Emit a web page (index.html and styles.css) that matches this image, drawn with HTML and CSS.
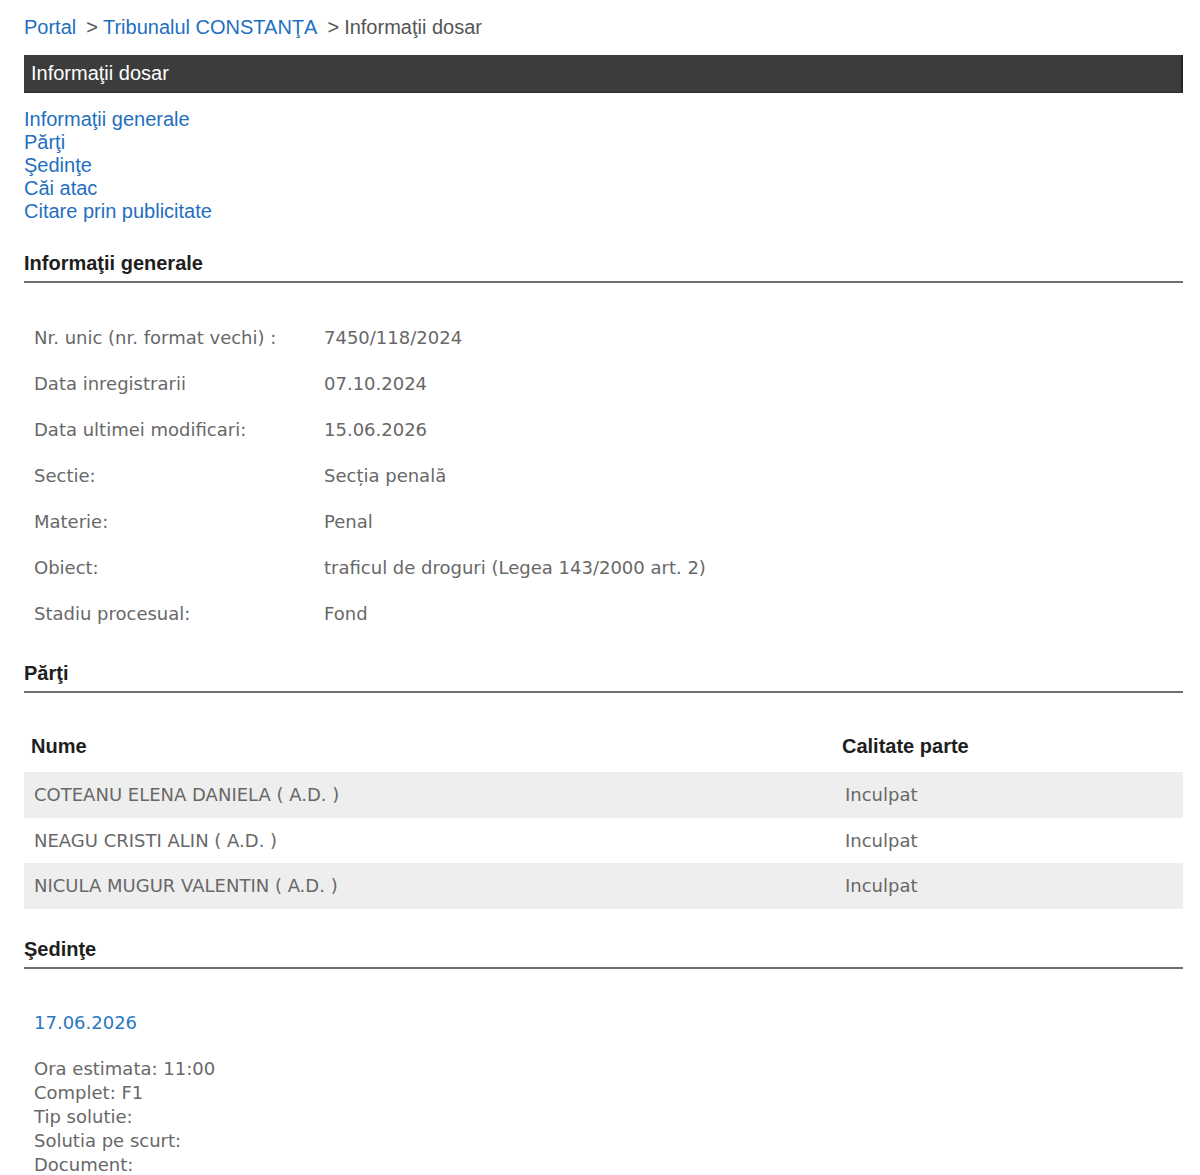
FILE: index.html
```html
<!DOCTYPE html>
<html lang="ro">

<head>
    <meta charset="UTF-8">
    <meta name="viewport" content="width=device-width, initial-scale=1.0">
    <title>Informaţii dosar</title>
    <link rel="stylesheet" href="styles.css">
</head>

<body>
    <div class="page">
        <div class="breadcrumb">
            <a href="#">Portal</a><span class="sep">&gt;</span><a href="#">Tribunalul CONSTANŢA</a><span class="sep">&gt;</span><span class="current">Informaţii dosar</span>
        </div>

        <div class="title-bar">Informaţii dosar</div>

        <ul class="toc">
            <li><a href="#generale">Informaţii generale</a></li>
            <li><a href="#parti">Părţi</a></li>
            <li><a href="#sedinte">Şedinţe</a></li>
            <li><a href="#cai">Căi atac</a></li>
            <li><a href="#citare">Citare prin publicitate</a></li>
        </ul>

        <h2 class="section-title" id="generale">Informaţii generale</h2>
        <table class="details">
            <tr><td class="label">Nr. unic (nr. format vechi) :</td><td>7450/118/2024</td></tr>
            <tr><td class="label">Data inregistrarii</td><td>07.10.2024</td></tr>
            <tr><td class="label">Data ultimei modificari:</td><td>15.06.2026</td></tr>
            <tr><td class="label">Sectie:</td><td>Secția penală</td></tr>
            <tr><td class="label">Materie:</td><td>Penal</td></tr>
            <tr><td class="label">Obiect:</td><td>traficul de droguri (Legea 143/2000 art. 2)</td></tr>
            <tr><td class="label">Stadiu procesual:</td><td>Fond</td></tr>
        </table>

        <h2 class="section-title after-details" id="parti">Părţi</h2>
        <table class="parties">
            <thead>
                <tr><th class="name-col">Nume</th><th>Calitate parte</th></tr>
            </thead>
            <tbody>
                <tr><td>COTEANU ELENA DANIELA ( A.D. )</td><td>Inculpat</td></tr>
                <tr><td>NEAGU CRISTI ALIN ( A.D. )</td><td>Inculpat</td></tr>
                <tr><td>NICULA MUGUR VALENTIN ( A.D. )</td><td>Inculpat</td></tr>
            </tbody>
        </table>

        <h2 class="section-title" id="sedinte">Şedinţe</h2>
        <div class="hearing">
            <div class="hearing-date">17.06.2026</div>
            <div class="hearing-info">
                Ora estimata: 11:00<br>
                Complet: F1<br>
                Tip solutie:<br>
                Solutia pe scurt:<br>
                Document:
            </div>
        </div>
    </div>
</body>
</html>
```

FILE: styles.css
```css
body {
    margin: 0;
    padding: 0;
    background: #fff;
    font-family: 'Liberation Sans', Arial, sans-serif;
    font-size: 20px;
    color: #333;
}

a {
    color: #1f6fbf;
    text-decoration: none;
}

.page {
    padding: 16px 17px 0 24px;
}

.breadcrumb {
    line-height: 23px;
    color: #555;
}

.breadcrumb .sep {
    margin: 0 5px 0 10px;
    color: #555;
}

.title-bar {
    margin-top: 16px;
    height: 38px;
    line-height: 37px;
    box-sizing: border-box;
    padding-left: 7px;
    background: #3c3c3c;
    border-right: 2px solid #262626;
    border-bottom: 1px solid #2c2c2c;
    color: #fff;
}

.toc {
    list-style: none;
    margin: 15px 0 0;
    padding: 0;
    line-height: 23px;
}

.section-title {
    margin: 29px 0 0;
    padding-bottom: 6px;
    font-size: 20px;
    line-height: 23px;
    font-weight: bold;
    color: #1e1e1e;
    border-bottom: 2px solid #6f6f6f;
}

.section-title.after-details {
    margin-top: 26px;
}

.details,
.parties {
    width: 100%;
    border-collapse: collapse;
    font-family: 'DejaVu Sans', Verdana, sans-serif;
    font-size: 18px;
    color: #686868;
}

.details {
    margin-top: 31px;
}

.details td {
    height: 46px;
    padding: 0 0 0 10px;
    vertical-align: middle;
}

.details td.label {
    width: 280px;
}

.parties {
    margin-top: 30px;
}

.parties th {
    height: 46px;
    padding: 0 0 3px 7px;
    text-align: left;
    font-family: 'Liberation Sans', Arial, sans-serif;
    font-size: 20px;
    font-weight: bold;
    color: #1e1e1e;
    vertical-align: middle;
}

.parties th.name-col {
    width: 804px;
}

.parties td {
    height: 45.5px;
    padding: 0 0 0 10px;
    vertical-align: middle;
}

.parties tbody tr:nth-child(odd) {
    background: #eeeeee;
}

.hearing {
    padding: 42px 0 0 10px;
    font-family: 'DejaVu Sans', Verdana, sans-serif;
    font-size: 18px;
    color: #686868;
}

.hearing-date {
    line-height: 24px;
    color: #2a78c2;
}

.hearing-info {
    margin-top: 22px;
    line-height: 24px;
}
```
